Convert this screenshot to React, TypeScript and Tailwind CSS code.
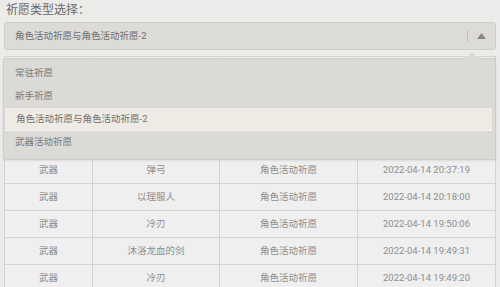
import React from "react";

const options = ["常驻祈愿", "新手祈愿", "角色活动祈愿与角色活动祈愿-2", "武器活动祈愿"];

const rows = [
  ["武器", "黑缨枪", "角色活动祈愿", "2022-04-14 20:52:41"],
  ["角色", "香菱", "角色活动祈愿", "2022-04-14 20:45:12"],
  ["武器", "飞天御剑", "角色活动祈愿", "2022-04-14 20:41:03"],
  ["武器", "弹弓", "角色活动祈愿", "2022-04-14 20:37:19"],
  ["武器", "以理服人", "角色活动祈愿", "2022-04-14 20:18:00"],
  ["武器", "冷刃", "角色活动祈愿", "2022-04-14 19:50:06"],
  ["武器", "沐浴龙血的剑", "角色活动祈愿", "2022-04-14 19:49:31"],
  ["武器", "冷刃", "角色活动祈愿", "2022-04-14 19:49:20"],
];

const cols = "grid grid-cols-[88px_127px_138px_138px]";

export default function App() {
  const selected = 2;
  return (
    <div
      className="w-[500px] h-[287px] overflow-hidden bg-[#ebebea] px-[4px] text-[#777]"
      style={{ fontFamily: 'Roboto, "Noto Sans CJK SC", sans-serif' }}
    >
      <div className="h-[22px] pl-[2px] pt-[1px] text-[12px] leading-[18px] text-[#6a6a6a]">
        祈愿类型选择：
      </div>

      <div className="relative">
        {/* select */}
        <div className="flex h-[28px] items-center rounded-[3px] border border-[#cfceca] bg-[#dcdbd8] pl-[10px] pr-[9px]">
          <span className="flex-1 text-[9.5px] text-[#6e6e6e]">
            角色活动祈愿与角色活动祈愿-2
          </span>
          <span className="mr-[9px] h-[12px] w-px bg-[#c2c0bc]" />
          <svg width="9" height="6" viewBox="0 0 9 6">
            <polygon points="4.5,0 9,6 0,6" fill="#8c8383" />
          </svg>
        </div>

        {/* dropdown */}
        <div className="absolute left-[-1px] right-[0px] top-[36px] z-10 rounded-[2px] border border-[#cdccc8] bg-[#dbdad6] pt-[3px] pb-[5px] shadow-[0_1px_2px_rgba(0,0,0,0.08)]">
          <div className="absolute right-[16px] top-[-7px] h-0 w-0 border-x-[7px] border-b-[7px] border-x-transparent border-b-[#dbdad6]" />
          {options.map((o, i) => (
            <div
              key={o}
              className={`flex h-[23px] items-center pl-[11px] text-[9.5px] ${
                i === selected
                  ? "ml-[1px] mr-[3px] bg-[#eeebe5] border-b border-[#f6f4f0] text-[#707070]"
                  : "text-[#7a7a7a]"
              }`}
            >
              {o}
            </div>
          ))}
        </div>
      </div>

      {/* table */}
      <div className="mt-[6px] border-l border-t border-[#d3d3d3] bg-[#efefef] w-[492px]">
        <div className={`${cols} h-[19px] text-[9.5px]`}>
          {["类型", "名称", "祈愿类型", "时间"].map((h) => (
            <div
              key={h}
              className="flex items-center justify-center border-b border-r border-[#d3d3d3]"
            >
              {h}
            </div>
          ))}
        </div>
        {rows.map((r, i) => (
          <div key={i} className={`${cols} h-[27px] text-[9.5px] text-[#8e8e8e]`}>
            {r.map((c, j) => (
              <div
                key={j}
                className="flex items-center justify-center border-b border-r border-[#d3d3d3]"
              >
                {c}
              </div>
            ))}
          </div>
        ))}
      </div>
    </div>
  );
}
